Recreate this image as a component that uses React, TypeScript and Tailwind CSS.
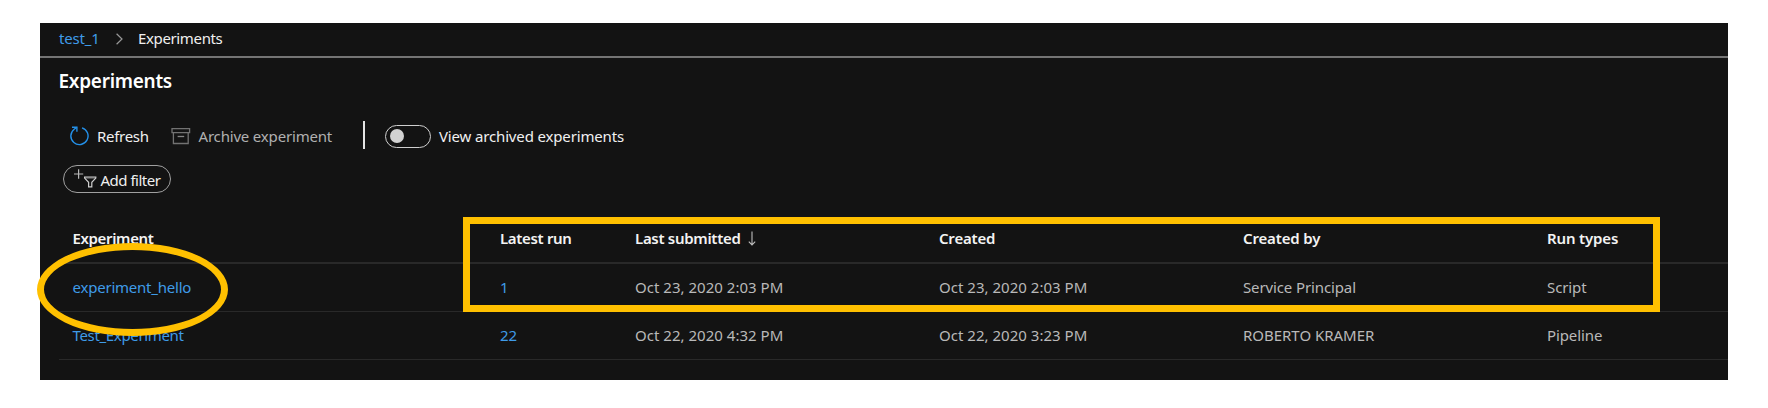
const columns = "grid grid-cols-[427.5px_135px_304px_304px_1fr] items-center pl-[13.5px]";

const rows = [
  {
    name: "experiment_hello",
    nameClass: "tracking-[-0.22px]",
    run: "1",
    submitted: "Oct 23, 2020 2:03 PM",
    created: "Oct 23, 2020 2:03 PM",
    by: "Service Principal",
    byClass: "tracking-[-0.12px]",
    type: "Script",
  },
  {
    name: "Test_Experiment",
    nameClass: "tracking-[-0.34px]",
    run: "22",
    submitted: "Oct 22, 2020 4:32 PM",
    created: "Oct 22, 2020 3:23 PM",
    by: "ROBERTO KRAMER",
    byClass: "tracking-[-0.02px]",
    type: "Pipeline",
  },
];

function RefreshIcon() {
  return (
    <svg className="block h-5 w-5 shrink-0" viewBox="0 0 20 20" fill="none" stroke="#2490e8" strokeWidth="1.4">
      <path d="M13 1.8A8.6 8.6 0 1 1 5.2 3.2L7.6 1.4" />
      <path d="M3 1.2h4.9v4.6" />
    </svg>
  );
}

function ArchiveIcon() {
  return (
    <svg className="block h-[18px] w-5 shrink-0" viewBox="0 0 20 18" fill="none" stroke="#727272" strokeWidth="1.3">
      <path d="M1 1.6h17.6v4H1z" />
      <path d="M2.4 5.6v10.9h14.8V5.6" />
      <path d="M6.6 9.5h6.6" stroke="#858585" />
    </svg>
  );
}

function AddFilterIcon() {
  return (
    <svg className="block h-5 w-6 shrink-0" viewBox="0 0 24 20" fill="none" stroke="#d0d0d0" strokeWidth="1.2">
      <path d="M4.6 .3v9.4M0 5h9.2" stroke="#b8b8b8" />
      <path d="M10.6 8h11.2v1.1l-4 4.2v4.5h-3.2v-4.5l-4-4.2z" />
      <path d="M11 9h10.4" strokeWidth=".6" />
    </svg>
  );
}

export default function App() {
  return (
    <div className="relative h-[408px] w-[1768px] overflow-hidden bg-white pt-[23px] pl-10 font-['Noto_Sans','Open_Sans',sans-serif] text-[15px] leading-5 whitespace-nowrap text-[#f0f0f0]">
      <main className="h-[357px] w-[1688px] bg-[#131313]">
        <nav className="flex h-[35px] items-center border-b-2 border-[#747474] pb-[3px] pl-[19px]">
          <a className="w-[57px] tracking-[-0.2px] text-[#3f9be8]">test_1</a>
          <svg className="mt-px mr-[15px] block h-3 w-[7px]" viewBox="0 0 7 12" fill="none" stroke="#999" strokeWidth="1.2">
            <path d="M.6.8 6 6 .6 11.2" />
          </svg>
          <span className="tracking-[-0.36px]">Experiments</span>
        </nav>

        <h1 className="flex h-[45px] items-center pl-[18.5px] text-[19px] font-semibold tracking-[-0.27px] text-white">
          Experiments
        </h1>

        <div className="flex h-[62px] items-center pt-1 pl-[29px]">
          <RefreshIcon />
          <span className="ml-2 w-[74px] tracking-[-0.3px]">Refresh</span>
          <ArchiveIcon />
          <span className="ml-[7.5px] w-[164.5px] tracking-[-0.18px] text-[#b0b0b0]">Archive experiment</span>
          <span className="mt-[-3px] h-7 w-[2px] bg-[#e4e4e4]" />
          <span className="ml-5 flex h-[23px] w-[46px] items-center rounded-full border-[1.5px] border-[#cfcfcf] pl-[4px]">
            <span className="h-[14px] w-[14px] rounded-full bg-[#d2d2d2]" />
          </span>
          <span className="ml-2 tracking-[-0.15px]">View archived experiments</span>
        </div>

        <button className="ml-[23px] flex h-7 w-[108px] items-center rounded-full border border-[#a0a0a0] pl-[10px]">
          <AddFilterIcon />
          <span className="ml-[2.5px] pt-px tracking-[-0.5px]">Add filter</span>
        </button>

        <section className="mt-[21px] ml-[19px]">
          <div className={`${columns} h-[50px] border-b-2 border-[#292929] pb-px font-semibold text-[#f3f3f3]`}>
            <span className="tracking-[-0.35px]">Experiment</span>
            <span className="tracking-[-0.33px]">Latest run</span>
            <span className="flex items-center tracking-[-0.3px]">
              Last submitted
              <svg className="mt-[2px] ml-[7px] block h-[15px] w-[8px]" viewBox="0 0 8 15" fill="none" stroke="#bdbdbd" strokeWidth="1.1">
                <path d="M4 .5v13.2M.8 10.7 4 13.9l3.2-3.2" />
              </svg>
            </span>
            <span className="tracking-[-0.2px]">Created</span>
            <span className="flex">
              <span className="w-[304px] shrink-0 tracking-[-0.15px]">Created by</span>
              <span className="tracking-[-0.15px]">Run types</span>
            </span>
          </div>
          {rows.map((row) => (
            <div key={row.name} className={`${columns} h-12 border-b border-[#292929] pb-[2px] text-[#b9b9b9]`}>
              <a className={`${row.nameClass} text-[#3f9be8]`}>{row.name}</a>
              <a className="tracking-[-0.2px] text-[#3f9be8]">{row.run}</a>
              <span className="tracking-[0.02px]">{row.submitted}</span>
              <span className="tracking-[0.02px]">{row.created}</span>
              <span className="flex">
                <span className={`${row.byClass} w-[304px] shrink-0`}>{row.by}</span>
                <span className="tracking-[-0.1px]">{row.type}</span>
              </span>
            </div>
          ))}
        </section>
      </main>

      <div className="absolute top-[243px] left-[37px] h-[93px] w-[191px] rounded-[50%] border-[7px] border-[#ffc000]" />
      <div className="absolute top-[217px] left-[463px] h-[95px] w-[1197px] border-[7px] border-[#ffc000]" />
    </div>
  );
}
